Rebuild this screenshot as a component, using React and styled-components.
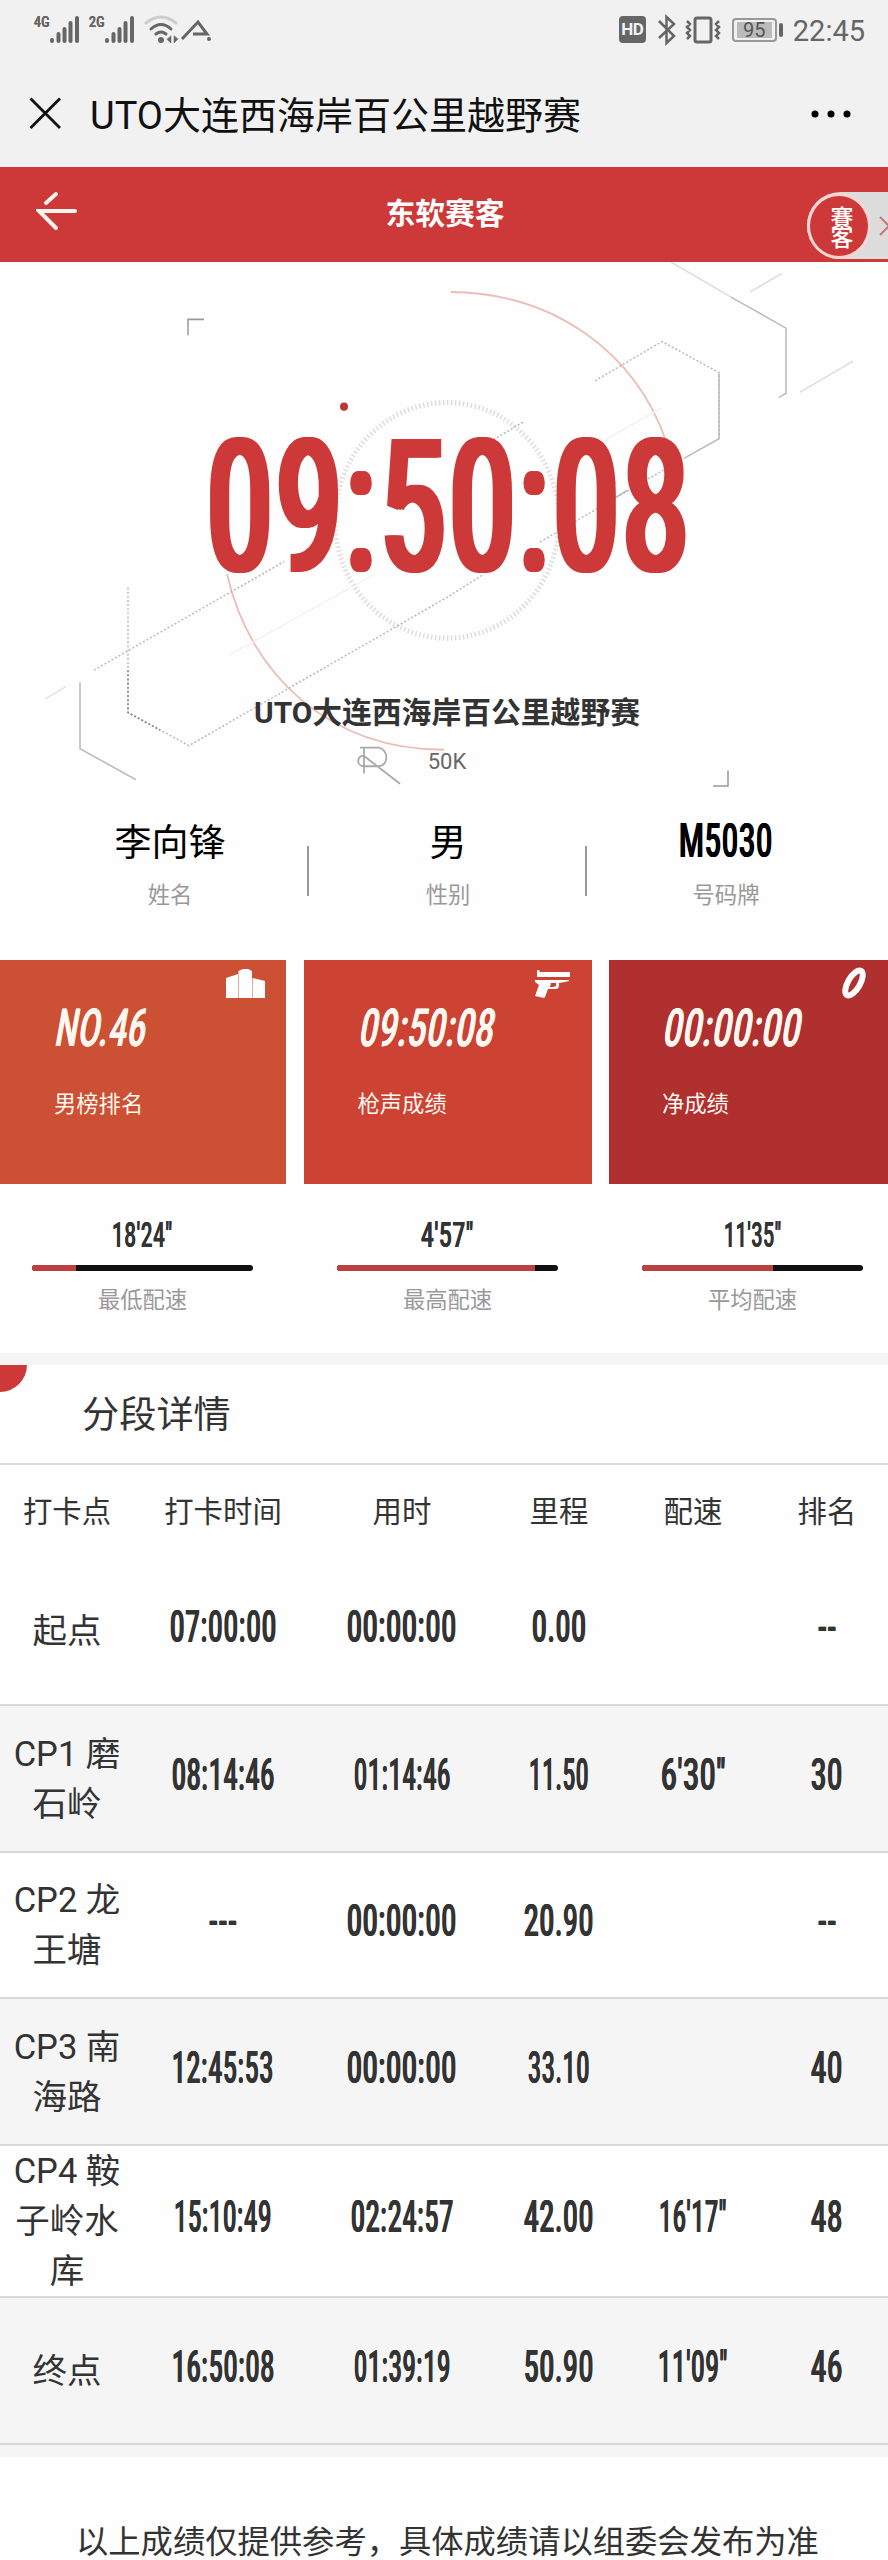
import React, { useLayoutEffect, useRef, useState } from "react";
import styled, { createGlobalStyle, css } from "styled-components";

const red = "#cc3938";
const text = "#333";
const muted = "#999";

const GlobalStyle = createGlobalStyle`
  body {
    margin: 0;
    background: #fff;
    font-family: Roboto, "Noto Sans CJK SC", sans-serif;
    color: ${text};
  }
`;

const Page = styled.div`
  width: 888px;
  height: 2560px;
  overflow: hidden;
  background: #fefefe;
`;

// Condensed digits
const FitBox = styled.span`
  display: inline-block;
  width: ${(p) => p.$width}px;
  height: ${(p) => p.$cap}px;
  line-height: ${(p) => p.$cap}px;
  white-space: nowrap;
  text-align: left;
`;

const FitInner = styled.span`
  display: inline-block;
  transform-origin: 0 50%;
  font-family: Roboto, sans-serif;
  font-size: ${(p) => p.$cap / 0.725}px;
  font-weight: 500;
  letter-spacing: 0.035em;
  ${(p) =>
    p.$bold &&
    css`
      text-shadow: ${p.$bold}px 0 currentColor, -${p.$bold}px 0 currentColor;
    `}
`;

const Fit = ({ width, cap, bold, slant = 0, children }) => {
  const ref = useRef(null);
  const [scale, setScale] = useState(0.6);

  useLayoutEffect(() => {
    setScale(width / ref.current.offsetWidth);
  }, [width, children]);

  return (
    <FitBox $width={width} $cap={cap}>
      <FitInner
        ref={ref}
        $cap={cap}
        $bold={bold}
        style={{ transform: `skewX(${slant}deg) scaleX(${scale})` }}
      >
        {children}
      </FitInner>
    </FitBox>
  );
};

// Status bar
const StatusBar = styled.div`
  display: flex;
  justify-content: space-between;
  height: 64px;
  padding: 0 23px 0 34px;
  background: #f1f1f1;
  color: #666;
`;

const StatusIcons = styled.div`
  display: flex;
  align-items: flex-start;
  padding-top: 14px;
`;

const Network = styled.span`
  width: 15px;
  height: 14px;
  line-height: 16px;
`;

const Bars = styled.svg`
  margin-right: 10px;
`;

const HdBadge = styled.span`
  width: 27px;
  height: 27px;
  margin: 2px 11px 0 0;
  border-radius: 4px;
  background: #666;
  color: #f1f1f1;
  font: 700 17px/27px Roboto, sans-serif;
  text-align: center;
  letter-spacing: -0.5px;
`;

const Battery = styled.span`
  box-sizing: border-box;
  width: 45px;
  height: 24px;
  margin: 4px 2px 0 11px;
  padding: 2px 3px;
  border: 2px solid #999;
  border-radius: 4px;
`;

const BatteryLevel = styled.span`
  display: block;
  height: 16px;
  background: #bbb;
  color: #555;
  font-size: 20px;
  line-height: 17px;
  text-align: center;
`;

const BatteryTip = styled.span`
  width: 4px;
  height: 14px;
  margin: 9px 10px 0 0;
  border-radius: 2px;
  background: #666;
`;

const Clock = styled.span`
  margin-top: 0;
  font-size: 29px;
  line-height: 35px;
`;

// Browser title bar
const TitleBar = styled.div`
  display: flex;
  align-items: center;
  box-sizing: border-box;
  height: 103px;
  padding: 0 37px 4px 29px;
  background: #f1f1f1;
`;

const PageTitle = styled.h1`
  flex: 1;
  margin: 0 0 3px 28px;
  font-size: 38px;
  font-weight: 400;
  color: #111;
`;

const AppBar = styled.header`
  position: relative;
  display: flex;
  align-items: center;
  height: 95px;
  padding-left: 36px;
  background: ${red};
`;

const BackArrow = styled.svg`
  margin-bottom: 7px;
`;

const AppTitle = styled.h2`
  flex: 1;
  margin: 0 78px 7px 0;
  padding-left: 2px;
  color: #fff;
  font-size: 29.8px;
  font-weight: 700;
  text-align: center;
`;

const FloatTab = styled.div`
  position: absolute;
  top: 25px;
  right: 0;
  display: flex;
  align-items: center;
  width: 81px;
  height: 67px;
  border-radius: 34px 0 0 34px;
  background: #dcdcdc;
`;

const FloatLogo = styled.div`
  display: flex;
  align-items: center;
  justify-content: center;
  box-sizing: border-box;
  width: 64px;
  height: 66px;
  border: 3px solid #fbd5d2;
  border-radius: 50%;
  background: ${red};
  color: #fff;
  font-size: 23px;
  font-weight: 500;
  letter-spacing: -3px;
  line-height: 28px;
  writing-mode: vertical-rl;
`;

// Result hero
const Hero = styled.section`
  position: relative;
  height: 540px;
`;

const HeroArt = styled.svg`
  position: absolute;
  top: 0;
  left: 0;
`;

const HeroBody = styled.div`
  position: relative;
  display: flex;
  flex-direction: column;
  align-items: center;
  padding-top: 179px;
  padding-left: 6px;
`;

const FinishTime = styled.div`
  height: 133px;
  padding-left: 5px;
  color: ${red};
`;

const RaceName = styled.h3`
  margin: 117px 0 0;
  font-size: 29.8px;
  font-weight: 700;
  line-height: 44px;
`;

const Distance = styled.div`
  margin-top: 14px;
  color: #666;
  font-size: 22px;
  line-height: 26px;
`;

// Runner info
const Info = styled.section`
  display: flex;
  align-items: flex-start;
  height: 158px;
  padding-left: 31px;
`;

const InfoItem = styled.div`
  display: flex;
  flex-direction: column;
  align-items: center;
  width: 278px;
  color: #000;
`;

const InfoValue = styled.div`
  height: 73px;
  padding-top: 17px;
  font-size: 37px;
  line-height: 50px;
  box-sizing: border-box;
`;

const InfoNumber = styled(InfoValue)`
  padding-top: 18px;
`;

const Divider = styled.i`
  flex: none;
  width: 2px;
  height: 50px;
  margin: 44px 0 0 -2px;
  background: #999;
`;

const Label = styled.div`
  color: ${muted};
  font-size: 22.3px;
  line-height: 41px;
`;

// Result cards
const Cards = styled.section`
  display: grid;
  grid-template-columns: 286px 288px 279px;
  column-gap: 17.5px;
  height: 224px;
`;

const Card = styled.div`
  position: relative;
  padding: 49px 0 0 ${(p) => p.$indent}px;
  background: ${(p) => p.$color};
  color: #fff8f0;
`;

const CardLabel = styled.div`
  margin: 32px 0 0 -3px;
  font-size: 22.3px;
  line-height: 52px;
`;

const CardValue = styled.div`
  height: 37px;
`;

const CardIcon = styled.svg`
  position: absolute;
  top: 7px;
  right: ${(p) => p.$right}px;
`;

// Pace bars
const Paces = styled.section`
  display: flex;
  gap: 84px;
  height: 169px;
  padding-left: 32px;
`;

const Pace = styled.div`
  display: flex;
  flex-direction: column;
  align-items: center;
  width: 221px;
  padding-top: 38px;
`;

const Track = styled.div`
  width: 100%;
  height: 6px;
  margin: 17px 0 9px;
  border-radius: 3px;
  background: #111;
  overflow: hidden;
`;

const Fill = styled.div`
  height: 100%;
  background: #bd4040;
`;

const Band = styled.div`
  height: 12px;
  background: #f5f5f5;
`;

// Split table
const SplitHeader = styled.div`
  position: relative;
  box-sizing: border-box;
  height: 100px;
  padding-left: 82px;
  border-bottom: 2px solid #ddd;
  font-size: 37.2px;
  line-height: 100px;
`;

const Corner = styled.i`
  position: absolute;
  top: 0;
  left: 0;
  width: 27px;
  height: 27px;
  border-bottom-right-radius: 27px;
  background: ${red};
`;

const Row = styled.div`
  display: grid;
  grid-template-columns: 134px 178px 180px 134px 134px 134px;
  align-items: center;
  justify-items: center;
  width: 894px;
  box-sizing: border-box;
  height: ${(p) => p.$height}px;
  border-bottom: 2px solid #d9d9d9;
  background: ${(p) => (p.$shaded ? "#f5f5f5" : "#fefefe")};
`;

const HeadRow = styled(Row)`
  padding-bottom: 4px;
  border: 0;
  font-size: 29.4px;
`;

const Point = styled.div`
  font-size: 34.5px;
  line-height: 50px;
  text-align: center;
  width: 124px;
`;

const Num = styled.div`
  height: 30px;
  margin-bottom: 10px;
`;

const Note = styled.footer`
  padding: 61px 0 0 76px;
  font-size: 32.3px;
  line-height: 48px;
  white-space: nowrap;
`;

const cards = [
  { color: "#cc5033", indent: 57, value: "NO.46", width: 91, label: "男榜排名" },
  { color: "#cc4233", indent: 57, value: "09:50:08", width: 135, label: "枪声成绩" },
  { color: "#b03030", indent: 56, value: "00:00:00", width: 138, label: "净成绩" },
];

const paces = [
  { value: "18'24\"", width: 61, fill: 20, label: "最低配速" },
  { value: "4'57\"", width: 53, fill: 89.5, label: "最高配速" },
  { value: "11'35\"", width: 58, fill: 59.5, label: "平均配速" },
];

const columns = ["打卡点", "打卡时间", "用时", "里程", "配速", "排名"];

// [value, drawn width]
const splits = [
  { point: ["起点"], h: 149, nums: [["07:00:00", 107], ["00:00:00", 110], ["0.00", 55], null, ["--", 19]] },
  { point: ["CP1 磨", "石岭"], h: 147, nums: [["08:14:46", 103], ["01:14:46", 97], ["11.50", 60], ["6'30\"", 65], ["30", 32]] },
  { point: ["CP2 龙", "王塘"], h: 146, nums: [["---", 29], ["00:00:00", 110], ["20.90", 70], null, ["--", 19]] },
  { point: ["CP3 南", "海路"], h: 147, nums: [["12:45:53", 102], ["00:00:00", 110], ["33.10", 62], null, ["40", 32]] },
  { point: ["CP4 鞍", "子岭水", "库"], h: 152, nums: [["15:10:49", 98], ["02:24:57", 103], ["42.00", 70], ["16'17\"", 68], ["48", 32]] },
  { point: ["终点"], h: 147, nums: [["16:50:08", 103], ["01:39:19", 97], ["50.90", 70], ["11'09\"", 70], ["46", 32]] },
];

const Signal = () => (
  <Bars width="30" height="30" fill="#666">
    <rect x="1" y="24" width="4" height="5" rx="2" />
    <rect x="7.500" y="18" width="4" height="11" rx="2" />
    <rect x="13.500" y="13" width="4" height="16" rx="2" />
    <rect x="19.500" y="7" width="4" height="22" rx="2" />
    <rect x="26" y="2" width="4" height="27" rx="2" />
  </Bars>
);

const WifiIcon = () => (
  <svg width="36" height="32" fill="none" stroke="#666" strokeWidth="3" strokeLinecap="round">
    <path d="M2 9Q17 -3 32 9" stroke="#ccc" />
    <path d="M7 15Q17 6 27 15M12 20Q17 16 22 20" />
    <circle cx="17" cy="26" r="1.500" />
    <path d="M27 22v7l-4-3.500zM30 22v7l4-4z" fill="#666" strokeWidth="0.500" />
  </svg>
);

const BrandIcon = () => (
  <svg width="34" height="32" fill="none" stroke="#666" strokeWidth="3">
    <path d="M2 25L18 8L27 20H13" />
    <circle cx="29" cy="25" r="2" fill="#666" stroke="none" />
  </svg>
);

const BluetoothIcon = () => (
  <svg width="20" height="32" fill="none" stroke="#666" strokeWidth="2.500">
    <path d="M2 7L17 22L9.500 29V3L17 10L2 24" />
  </svg>
);

const VibrateIcon = () => (
  <svg width="36" height="32" fill="none" stroke="#666" strokeWidth="3">
    <rect x="10" y="4" width="16" height="24" rx="2" />
    <path d="M2 7l3 3l-3 3l3 3l-3 3l3 3l-3 3M34 7l-3 3l3 3l-3 3l3 3l-3 3l3 3" strokeWidth="2.500" />
  </svg>
);

const CardGlyph = ({ index }) => {
  if (index === 0) {
    return (
      <CardIcon $right={20} width="41" height="32" fill="#fff">
        <path d="M1 11L13 7V31H1zM13.500 4L18 2H23L27 4V31H13.500zM27.500 11L40 14V31H27.500z" />
      </CardIcon>
    );
  }
  if (index === 1) {
    return (
      <CardIcon $right={21} width="38" height="32" fill="#fff">
        <path d="M4 3H6L7 5H37V10H4zM2 13H36V14L32 15L26 16V20L24 22H15L12 30L11 31L2 29L6 18L2 15z" />
        <path d="M18 16H23V19L20 20H17z" fill="#cc4233" />
      </CardIcon>
    );
  }
  return (
    <CardIcon $right={20} width="28" height="34" fill="none" stroke="#fff">
      <ellipse cx="14" cy="16" rx="6" ry="14" strokeWidth="6" transform="rotate(30 14 16)" />
    </CardIcon>
  );
};

const HeroBackdrop = () => (
  <HeroArt
    width="888"
    height="558"
    viewBox="0 0 888 540"
    preserveAspectRatio="none"
    fill="none"
    stroke="#bbb"
  >
    <g stroke="#ecbdb8" strokeWidth="1.800">
      <path d="M451 29C555 30 635 88 666 173" />
      <path d="M227 302C250 400 330 472 444 472" />
    </g>
    <ellipse cx="447" cy="250" rx="112" ry="114" stroke="#ddd" strokeWidth="5" strokeDasharray="1.500 2.500" />
    <circle cx="344" cy="140" r="4" fill="#bf3438" stroke="none" />
    <g stroke="#999" strokeWidth="1.500">
      <path d="M188 71V55.500H204M728 492V507H713" />
    </g>
    <g strokeWidth="1.500">
      <path d="M671 0L731 34" stroke="#ddd" />
      <path d="M731 34L786 64V127L779 131" />
      <path d="M750 29L782 11M800 126L853 96" stroke="#ddd" />
      <path d="M80 407V471L136 501" />
      <path d="M45 423L66 411" stroke="#e4e4e4" />
      <path d="M230 380L375 302M604 173L662 141" stroke="#f3f3f3" />
      <path d="M719 108V171L684 190M627 221L612 230" stroke="#bbb" />
    </g>
    <g strokeWidth="1.500" strokeDasharray="2 2" stroke="#bbb">
      <path d="M595 115L662 77L719 107V170" />
      <path d="M94 395L284 290M490 174L523 155M540 271L664 201" />
      <path d="M128 315V436L189 468L448 324L484 302" />
      <path d="M128 395V436L160 453" stroke="#888" />
    </g>
    <path d="M360 470H379C389 472 389 488 378 488H363C356 487 357 477 364 478L400 505M364 470V495" stroke="#aaa" strokeWidth="1.800" />
  </HeroArt>
);

const App = () => {
  return (
    <Page>
      <GlobalStyle />
      <StatusBar>
        <StatusIcons>
          <Network>
            <Fit width={16} cap={11} bold={0.3}>4G</Fit>
          </Network>
          <Signal />
          <Network>
            <Fit width={16} cap={11} bold={0.3}>2G</Fit>
          </Network>
          <Signal />
          <WifiIcon />
          <BrandIcon />
        </StatusIcons>
        <StatusIcons>
          <HdBadge>HD</HdBadge>
          <BluetoothIcon />
          <svg width="8" height="1" />
          <VibrateIcon />
          <Battery>
            <BatteryLevel>95</BatteryLevel>
          </Battery>
          <BatteryTip />
          <Clock>22:45</Clock>
        </StatusIcons>
      </StatusBar>

      <TitleBar>
        <svg width="33" height="33" stroke="#111" strokeWidth="2.800">
          <path d="M1.500 1.500L31 31M31 1.500L1.500 31" />
        </svg>
        <PageTitle>UTO大连西海岸百公里越野赛</PageTitle>
        <svg width="40" height="8" fill="#000">
          <circle cx="4" cy="4" r="3.500" />
          <circle cx="20" cy="4" r="3.500" />
          <circle cx="36" cy="4" r="3.500" />
        </svg>
      </TitleBar>

      <AppBar>
        <BackArrow width="42" height="42" fill="none" stroke="#fff4f0" strokeWidth="4" strokeLinecap="round">
          <path d="M39 21H3L20 38M10 13L20 4" />
        </BackArrow>
        <AppTitle>东软赛客</AppTitle>
        <FloatTab>
          <FloatLogo>賽客</FloatLogo>
          <svg width="17" height="24" fill="none" stroke="#c77" strokeWidth="2">
            <path d="M9 3L18 12L9 21" />
          </svg>
        </FloatTab>
      </AppBar>

      <Hero>
        <HeroBackdrop />
        <HeroBody>
          <FinishTime>
            <Fit width={485} cap={134} bold={4.5}>09:50:08</Fit>
          </FinishTime>
          <RaceName>UTO大连西海岸百公里越野赛</RaceName>
          <Distance>50K</Distance>
        </HeroBody>
      </Hero>

      <Info>
        <InfoItem>
          <InfoValue>李向锋</InfoValue>
          <Label>姓名</Label>
        </InfoItem>
        <Divider />
        <InfoItem>
          <InfoValue>男</InfoValue>
          <Label>性别</Label>
        </InfoItem>
        <Divider />
        <InfoItem>
          <InfoNumber>
            <Fit width={94} cap={35} bold={0.8}>M5030</Fit>
          </InfoNumber>
          <Label>号码牌</Label>
        </InfoItem>
      </Info>

      <Cards>
        {cards.map((card, i) => (
          <Card key={card.label} $color={card.color} $indent={card.indent}>
            <CardGlyph index={i} />
            <CardValue>
              <Fit width={card.width} cap={38} bold={0.7} slant={-10}>{card.value}</Fit>
            </CardValue>
            <CardLabel>{card.label}</CardLabel>
          </Card>
        ))}
      </Cards>

      <Paces>
        {paces.map((pace) => (
          <Pace key={pace.label}>
            <Fit width={pace.width} cap={26} bold={0.3}>{pace.value}</Fit>
            <Track>
              <Fill style={{ width: `${pace.fill}%` }} />
            </Track>
            <Label>{pace.label}</Label>
          </Pace>
        ))}
      </Paces>

      <Band />
      <SplitHeader>
        <Corner />
        分段详情
      </SplitHeader>
      <HeadRow $height={92}>
        {columns.map((name) => (
          <span key={name}>{name}</span>
        ))}
      </HeadRow>
      {splits.map((split, i) => (
        <Row key={split.point[0]} $height={split.h} $shaded={i % 2 === 1}>
          <Point>
            {split.point.map((line) => (
              <div key={line}>{line}</div>
            ))}
          </Point>
          {split.nums.map((num, n) => (
            <Num key={n}>
              {num && <Fit width={num[1]} cap={32} bold={0.7}>{num[0]}</Fit>}
            </Num>
          ))}
        </Row>
      ))}
      <Band />
      <Note>以上成绩仅提供参考，具体成绩请以组委会发布为准</Note>
    </Page>
  );
};

export default App;
